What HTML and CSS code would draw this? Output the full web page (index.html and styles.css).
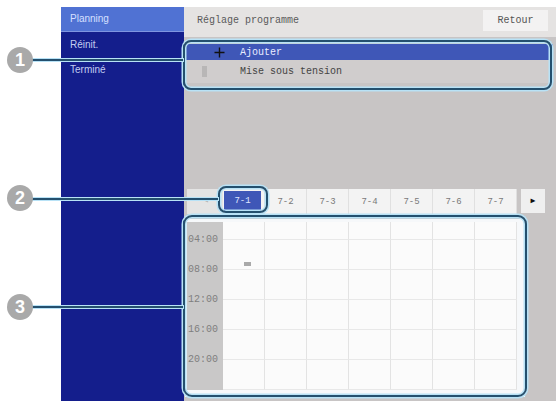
FILE: index.html
```html
<!DOCTYPE html>
<html>
<head>
<meta charset="utf-8">
<link rel="stylesheet" href="styles.css">
</head>
<body>
<div class="screen">
  <nav class="sidebar">
    <div class="nav-item active">Planning</div>
    <div class="nav-item">Réinit.</div>
    <div class="nav-item">Terminé</div>
  </nav>
  <main class="main">
    <header class="header">
      <span class="title">Réglage programme</span>
      <span class="btn-back">Retour</span>
    </header>
    <div class="list">
      <div class="row row-add">
        <span class="row-icon"><svg width="11" height="11" viewBox="0 0 11 11"><path d="M5.5 0.5v10M0.5 5.5h10" stroke="#111" stroke-width="1.4"/></svg></span>
        <span class="row-text">Ajouter</span>
      </div>
      <div class="row row-item">
        <span class="row-icon"><span class="item-mark"></span></span>
        <span class="row-text">Mise sous tension</span>
      </div>
    </div>
    <div class="tabs">
      <div class="tab-prev">&#9666;</div>
      <div class="tab tab-active"><span>7-1</span></div>
      <div class="tab"><span>7-2</span></div>
      <div class="tab"><span>7-3</span></div>
      <div class="tab"><span>7-4</span></div>
      <div class="tab"><span>7-5</span></div>
      <div class="tab"><span>7-6</span></div>
      <div class="tab"><span>7-7</span></div>
      <div class="tab-next">&#9654;</div>
    </div>
    <div class="sched">
      <div class="times">
        <span>04:00</span><span>08:00</span><span>12:00</span><span>16:00</span><span>20:00</span>
      </div>
      <div class="grid">
        <div class="cell"></div><div class="cell"></div><div class="cell"></div><div class="cell"></div><div class="cell"></div><div class="cell"></div><div class="cell"></div>
        <div class="cell"><span class="event"></span></div><div class="cell"></div><div class="cell"></div><div class="cell"></div><div class="cell"></div><div class="cell"></div><div class="cell"></div>
        <div class="cell"></div><div class="cell"></div><div class="cell"></div><div class="cell"></div><div class="cell"></div><div class="cell"></div><div class="cell"></div>
        <div class="cell"></div><div class="cell"></div><div class="cell"></div><div class="cell"></div><div class="cell"></div><div class="cell"></div><div class="cell"></div>
        <div class="cell"></div><div class="cell"></div><div class="cell"></div><div class="cell"></div><div class="cell"></div><div class="cell"></div><div class="cell"></div>
        <div class="cell"></div><div class="cell"></div><div class="cell"></div><div class="cell"></div><div class="cell"></div><div class="cell"></div><div class="cell"></div>
      </div>
    </div>
  </main>
</div>

<div class="callout-box box1"></div>
<div class="callout-box box2"></div>
<div class="callout-box box3"></div>
<div class="callout-line line1"></div>
<div class="callout-line line2"></div>
<div class="callout-line line3"></div>
<div class="callout-num num1">1</div>
<div class="callout-num num2">2</div>
<div class="callout-num num3">3</div>
</body>
</html>
```
FILE: styles.css
```css
html, body {
  margin: 0;
  padding: 0;
  background: #ffffff;
  width: 556px;
  height: 401px;
  overflow: hidden;
}
body {
  position: relative;
  font-family: "Liberation Sans", Arial, sans-serif;
}
.screen {
  margin: 7px 0 0 61px;
  width: 495px;
  height: 394px;
  display: flex;
}
.sidebar {
  width: 123px;
  background: #141e8c;
  display: flex;
  flex-direction: column;
}
.nav-item {
  height: 25px;
  line-height: 25px;
  padding-left: 9px;
  font-size: 10px;
  color: #c3cdf0;
}
.nav-item.active {
  height: 24px;
  line-height: 24px;
  background: #5072d3;
  color: #d6e0ff;
  border-bottom: 1px solid #7f95e0;
}
.main {
  flex: 1;
  background: #c8c5c5;
  display: flex;
  flex-direction: column;
  font-family: "Liberation Mono", "Courier New", monospace;
}
.header {
  height: 30px;
  background: #e5e3e2;
  display: flex;
  justify-content: space-between;
  align-items: flex-start;
  padding: 0 8px 0 13px;
}
.title {
  margin-top: 8px;
  font-size: 10px;
  color: #5a5a5a;
}
.btn-back {
  margin-top: 3px;
  width: 65px;
  height: 21px;
  line-height: 21px;
  text-align: center;
  background: #f3f2f2;
  font-size: 10px;
  color: #555;
}
.list {
  margin: 7px 3px 0 2px;
  background: #d0cdcd;
}
.row {
  display: flex;
  align-items: center;
}
.row-add {
  height: 16px;
  background: #3f57b7;
}
.row-item {
  height: 18px;
  margin-top: 2px;
  margin-bottom: 3px;
}
.row-icon {
  width: 54px;
  display: flex;
  justify-content: center;
}
.row-add .row-icon {
  padding-left: 28px;
  width: 26px;
  justify-content: flex-start;
}
.item-mark {
  width: 5px;
  height: 11px;
  background: #b8b6b6;
  margin-left: -18px;
}
.row-text {
  font-size: 10px;
  color: #444;
}
.row-add .row-text {
  color: #e8ecff;
}
.tabs {
  margin: 106px 0 0 3px;
  height: 25px;
  display: flex;
}
.tab-prev {
  width: 36px;
  background: #e4e4e4;
  color: #b5b5b5;
  font-size: 9px;
  line-height: 25px;
  text-align: right;
  padding-right: 0;
  box-sizing: border-box;
  padding-right: 14px;
}
.tab {
  width: 42px;
  background: #f3f3f3;
  border-right: 1px solid #e0e0e0;
  box-sizing: border-box;
  display: flex;
  align-items: center;
  justify-content: center;
  font-size: 9px;
  color: #7a7a7a;
}
.tab-active {
  padding: 2px 3px 3px 1px;
}
.tab-active span {
  flex: 1;
  align-self: stretch;
  background: #3f57b7;
  color: #dfe5ff;
  display: flex;
  align-items: center;
  justify-content: center;
}
.tab-next {
  margin-left: 4px;
  width: 24px;
  height: 24px;
  background: #efefef;
  color: #111;
  font-size: 8px;
  line-height: 24px;
  text-align: center;
}
.sched {
  margin: 5px 0 0 1px;
  width: 340px;
  height: 178px;
  background: #f6f8fa;
  box-sizing: border-box;
  padding: 3px 8px 0 2px;
  display: flex;
}
.times {
  width: 36px;
  height: 168px;
  background: #c9c8c8;
  display: flex;
  flex-direction: column;
  padding-top: 3px;
  box-sizing: border-box;
}
.times span {
  height: 30px;
  line-height: 30px;
  font-size: 10px;
  color: #7f7f7f;
  text-align: left;
  padding-left: 1px;
}
.grid {
  width: 294px;
  height: 168px;
  display: grid;
  grid-template-columns: repeat(7, 42px);
  grid-template-rows: 18px repeat(5, 30px);
  background: #fbfbfb;
}
.cell {
  border-right: 1px solid #e3e3e3;
  border-bottom: 1px solid #e8e8e8;
}
.event {
  display: block;
  width: 7px;
  height: 4px;
  margin: 22px 0 0 21px;
  background: #a9a9a9;
}
.callout-box {
  position: absolute;
  border: 2px solid #24506e;
  border-radius: 8px;
  box-shadow: 0 0 0 1.5px #b8e2f6, inset 0 0 0 1.5px #b8e2f6;
}
.box1 { left: 183px; top: 40px; width: 365px; height: 46px; }
.box2 { left: 218px; top: 186px; width: 46px; height: 23px; border-radius: 8px; }
.box3 { left: 183px; top: 215px; width: 340px; height: 178px; border-radius: 9px; }
.callout-line {
  position: absolute;
  height: 2px;
  background: #24506e;
  box-shadow: 0 0 0 1px #b8e2f6;
}
.line1 { left: 32px; top: 59px; width: 151px; }
.line2 { left: 32px; top: 198px; width: 186px; }
.line3 { left: 32px; top: 306px; width: 151px; }
.callout-num {
  position: absolute;
  left: 7px;
  width: 26px;
  height: 26px;
  border-radius: 50%;
  background: #a9a9a9;
  color: #ffffff;
  font-family: "Liberation Sans", Arial, sans-serif;
  font-weight: bold;
  font-size: 18px;
  line-height: 26px;
  text-align: center;
}
.num1 { top: 47px; }
.num2 { top: 185px; }
.num3 { top: 294px; }
```
